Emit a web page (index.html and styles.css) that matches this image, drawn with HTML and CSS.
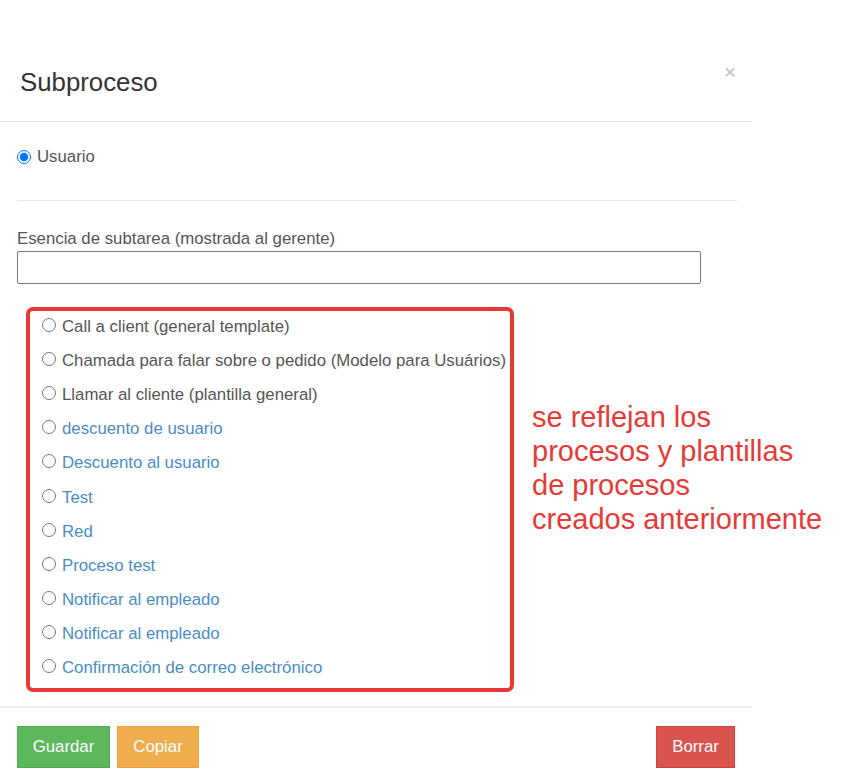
FILE: index.html
```html
<!DOCTYPE html>
<html lang="es">
<head>
<meta charset="utf-8">
<title>Subproceso</title>
<link rel="stylesheet" href="styles.css">
</head>
<body>
<div class="modal">
  <div class="modal-header">
    <h2 class="title">Subproceso</h2>
    <span class="close">×</span>
  </div>
  <div class="modal-body">
    <label class="radio-row user-row"><input type="radio" name="type" checked> <span>Usuario</span></label>
    <div class="sep"></div>
    <label class="field-label">Esencia de subtarea (mostrada al gerente)</label>
    <input class="text-input" type="text">
    <div class="list-box">
      <label class="item"><input type="radio" name="p"><span class="gray">Call a client (general template)</span></label>
      <label class="item"><input type="radio" name="p"><span class="gray">Chamada para falar sobre o pedido (Modelo para Usuários)</span></label>
      <label class="item"><input type="radio" name="p"><span class="gray">Llamar al cliente (plantilla general)</span></label>
      <label class="item"><input type="radio" name="p"><span class="link">descuento de usuario</span></label>
      <label class="item"><input type="radio" name="p"><span class="link">Descuento al usuario</span></label>
      <label class="item"><input type="radio" name="p"><span class="link">Test</span></label>
      <label class="item"><input type="radio" name="p"><span class="link">Red</span></label>
      <label class="item"><input type="radio" name="p"><span class="link">Proceso test</span></label>
      <label class="item"><input type="radio" name="p"><span class="link">Notificar al empleado</span></label>
      <label class="item"><input type="radio" name="p"><span class="link">Notificar al empleado</span></label>
      <label class="item"><input type="radio" name="p"><span class="link">Confirmación de correo electrónico</span></label>
    </div>
  </div>
  <div class="modal-footer">
    <button class="btn btn-green">Guardar</button>
    <button class="btn btn-orange">Copiar</button>
    <span class="spacer"></span>
    <button class="btn btn-red">Borrar</button>
  </div>
</div>
<div class="note">se reflejan los<br>procesos y plantillas<br>de procesos<br>creados anteriormente</div>
</body>
</html>
```
FILE: styles.css
```css
html, body {
  margin: 0;
  padding: 0;
  background: #fff;
}
body {
  font-family: "Liberation Sans", Arial, sans-serif;
  color: #555;
  position: relative;
  width: 867px;
  height: 780px;
  overflow: hidden;
}
.modal {
  width: 752px;
  padding-top: 50px;
}
.modal-header {
  height: 71px;
  border-bottom: 1px solid #e5e5e5;
  display: flex;
  align-items: flex-start;
  justify-content: space-between;
  padding: 0 16px 0 20px;
}
.title {
  margin: 17px 0 0 0;
  font-size: 25.8px;
  font-weight: normal;
  color: #333;
  line-height: 30px;
}
.close {
  margin-top: 10px;
  font-size: 21px;
  color: #bbb;
  line-height: 24px;
}
.modal-body {
  padding: 0 15px 0 17px;
}
.radio-row {
  display: flex;
  align-items: center;
  height: 20px;
  margin-top: 25px;
  font-size: 16.8px;
}
.radio-row input {
  margin: 0 6px 0 0;
  width: 14px;
  height: 14px;
}
.sep {
  border-top: 1px solid #e8e8e8;
  margin-top: 33px;
}
.field-label {
  display: block;
  margin-top: 28px;
  font-size: 16.8px;
  line-height: 20px;
}
.text-input {
  display: block;
  box-sizing: border-box;
  width: 684px;
  height: 33px;
  margin: 2px 0 0 0;
  border: 1px solid #777;
  border-radius: 2px;
  padding: 0 6px;
}
.list-box {
  margin: 23px 0 0 9px;
  width: 488px;
  height: 385px;
  box-sizing: border-box;
  border: 4px solid #e53a35;
  border-radius: 7px;
  padding: 0 0 0 12px;
}
.item {
  display: flex;
  align-items: center;
  height: 34.1px;
  font-size: 16.8px;
  white-space: nowrap;
}
.item:first-child {
  margin-top: -1px;
}
.item input {
  margin: -4px 6px 0 0;
  width: 14px;
  height: 14px;
}
.gray { color: #555; }
.link { color: #4a8cc6; }
.modal-footer {
  margin-top: 14px;
  border-top: 2px solid #eeeeee;
  display: flex;
  padding: 18px 17px 0 17px;
  gap: 7px;
}
.spacer { flex: 1; }
.btn {
  height: 42px;
  border: 1px solid transparent;
  color: #fff;
  font-family: "Liberation Sans", Arial, sans-serif;
  font-size: 16.8px;
  padding: 0;
  border-radius: 0;
}
.btn-green { background: #5cb85c; border-color: #4cae4c; width: 93px; }
.btn-orange { background: #f0ad4e; border-color: #eea236; width: 82px; }
.btn-red { background: #d9534f; border-color: #d43f3a; width: 79px; }
.note {
  position: absolute;
  left: 532px;
  top: 400px;
  font-family: "Liberation Sans", Arial, sans-serif;
  font-size: 29px;
  line-height: 34px;
  color: #e53a35;
}
```
